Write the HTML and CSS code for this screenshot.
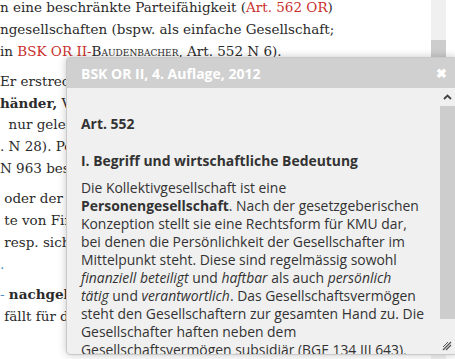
FILE: index.html
```html
<!DOCTYPE html>
<html lang="de">
<head>
  <meta charset="UTF-8">
  <meta name="viewport" content="width=device-width, initial-scale=1">
  <title>Kommentar</title>
  <link rel="stylesheet" href="styles.css">
</head>
<body>
  <div class="page">
    <div class="article">
      <p>
        <span class="line">n eine beschränkte Parteifähigkeit (<a class="ref">Art. 562 OR</a>)</span>
        <span class="line">ngesellschaften (bspw. als einfache Gesellschaft;</span>
        <span class="line">in <a class="ref">BSK OR II-</a><span class="author">Baudenbacher</span>, Art. 552 N 6).</span>
      </p>
      <p>
        <span class="line">Er erstreckt sich</span>
        <span class="line"><b>händer,</b> Vertreter</span>
        <span class="line">&nbsp;&nbsp;nur gelegentlich</span>
        <span class="line">. N 28). Personen</span>
        <span class="line">N 963 besonders</span>
      </p>
      <p>
        <span class="line">&nbsp;oder der Gesellschaft</span>
        <span class="line">&nbsp;te von Firmen</span>
        <span class="line">&nbsp;resp. sich</span>
        <span class="line"><span class="blue">.</span></span>
      </p>
      <p>
        <span class="line"><span class="blue">-</span> <b>nachgelagert</b></span>
        <span class="line">&nbsp;fällt für die</span>
      </p>
    </div>
    <div class="page-scroll">
      <div class="page-thumb"></div>
    </div>
  </div>

  <div class="dialog">
    <div class="dialog-title">
      <span>BSK OR II, 4. Auflage, 2012</span>
      <span class="close">&#x2716;</span>
    </div>
    <div class="dialog-body">
      <div class="dialog-content">
        <h3>Art. 552</h3>
        <h4>I. Begriff und wirtschaftliche Bedeutung</h4>
        <p>Die Kollektivgesellschaft ist eine<br>
          <b>Personengesellschaft</b>. Nach der gesetzgeberischen<br>
          Konzeption stellt sie eine Rechtsform für KMU dar,<br>
          bei denen die Persönlichkeit der Gesellschafter im<br>
          Mittelpunkt steht. Diese sind regelmässig sowohl<br>
          <i>finanziell beteiligt</i> und <i>haftbar</i> als auch <i>persönlich</i><br>
          <i>tätig</i> und <i>verantwortlich</i>. Das Gesellschaftsvermögen<br>
          steht den Gesellschaftern zur gesamten Hand zu. Die<br>
          Gesellschafter haften neben dem<br>
          Gesellschaftsvermögen subsidiär (BGE 134 III 643),<br>
          solidarisch und unbeschränkt.</p>
      </div>
      <div class="scrollbar">
        <div class="scroll-up">
          <svg width="9" height="6" viewBox="0 0 9 6"><polyline points="1,5 4.5,1.5 8,5" fill="none" stroke="#444" stroke-width="1.8"/></svg>
        </div>
        <div class="scroll-thumb"></div>
      </div>
    </div>
    <svg class="grip" width="10" height="10" viewBox="0 0 10 10">
      <line x1="1" y1="9" x2="9" y2="1" stroke="#555" stroke-width="1.2"/>
      <line x1="4" y1="9" x2="9" y2="4" stroke="#555" stroke-width="1.2"/>
      <line x1="1" y1="6" x2="6" y2="1" stroke="#555" stroke-width="1"/>
    </svg>
  </div>
</body>
</html>
```

FILE: styles.css
```css
body {
  margin: 0;
  background: #fff;
  overflow: hidden;
}

.page {
  display: flex;
  height: 359px;
}

.article {
  width: 431px;
  font-family: "DejaVu Serif", serif;
  font-size: 13.5px;
  line-height: 21.8px;
  color: #2b2b2b;
  margin-top: -3px;
}

.article p {
  margin: 0 0 8.5px;
}

.line {
  display: block;
  white-space: nowrap;
}

.ref {
  color: #c9302c;
}

.author {
  font-variant: small-caps;
}

.blue {
  color: #4a90c8;
}

.page-scroll {
  width: 15px;
  background: #f0f0f0;
  padding-top: 40px;
}

.page-thumb {
  height: 200px;
  background: #cdcdcd;
}

.dialog {
  position: absolute;
  left: 66px;
  top: 57px;
  width: 390px;
  height: 296px;
  background: #f0f0f0;
  border: 1px solid #c9c9c9;
  border-radius: 4px;
  box-shadow: 0 0 8px rgba(0, 0, 0, 0.22);
  display: flex;
  flex-direction: column;
  overflow: hidden;
  font-family: "Open Sans", sans-serif;
}

.dialog-title {
  height: 30px;
  flex-shrink: 0;
  background: #d0d0d0;
  color: #fff;
  font-size: 14px;
  font-weight: bold;
  display: flex;
  align-items: center;
  justify-content: space-between;
  padding: 0 10px 0 14px;
}

.close {
  font-size: 13px;
}

.dialog-body {
  flex: 1;
  display: flex;
  overflow: hidden;
  min-height: 0;
}

.dialog-content {
  flex: 1;
  padding: 27px 8px 0 14px;
  font-size: 13.9px;
  line-height: 18px;
  color: #333;
  white-space: nowrap;
  overflow: hidden;
}

.dialog-content h3,
.dialog-content h4 {
  font-size: 13.9px;
  margin: 0;
}

.dialog-content h4 {
  margin: 19px 0 9px;
}

.dialog-content p {
  margin: 0;
}

.scrollbar {
  width: 15px;
  flex-shrink: 0;
  margin-right: 2px;
  display: flex;
  flex-direction: column;
}

.scroll-up {
  height: 18px;
  display: flex;
  align-items: center;
  justify-content: center;
}

.scroll-thumb {
  height: 213px;
  background: #cdcdcd;
}

.grip {
  position: absolute;
  right: 5px;
  bottom: 3px;
}
```
